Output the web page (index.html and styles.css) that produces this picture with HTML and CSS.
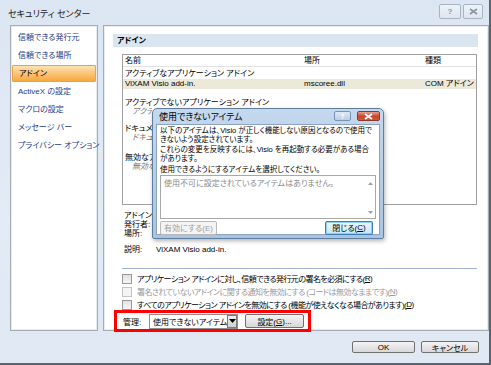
FILE: index.html
```html
<!DOCTYPE html>
<html lang="ja">
<head>
    <meta charset="UTF-8">
    <title>セキュリティ センター</title>
    <link rel="stylesheet" href="styles.css">
</head>
<body>
    <div class="window">
        <!-- タイトルバー -->
        <div class="titlebar">
            <span class="title">セキュリティ センター</span>
            <div class="caption-buttons">
                <span class="cap-btn">?</span>
                <span class="cap-btn close">
                    <svg width="9" height="7" viewBox="0 0 9 7"><path d="M1 1 L8 6 M8 1 L1 6" stroke="#8a96a6" stroke-width="1.6"/></svg>
                </span>
            </div>
        </div>

        <div class="main">
            <!-- 左ナビ -->
            <ul class="nav">
                <li>信頼できる発行元</li>
                <li>信頼できる場所</li>
                <li class="active">アドイン</li>
                <li>ActiveX の設定</li>
                <li>マクロの設定</li>
                <li>メッセージ バー</li>
                <li>プライバシー オプション</li>
            </ul>

            <!-- 右パネル -->
            <div class="panel">
                <div class="section-head">アドイン</div>

                <div class="addin-table">
                    <div class="row head">
                        <span class="c-name">名前</span>
                        <span class="c-loc">場所</span>
                        <span class="c-type">種類</span>
                    </div>
                    <div class="row group">アクティブなアプリケーション アドイン</div>
                    <div class="row selected">
                        <span class="c-name">ViXAM Visio add-in.</span>
                        <span class="c-loc">mscoree.dll</span>
                        <span class="c-type">COM アドイン</span>
                    </div>
                    <div class="row group gap1">アクティブでないアプリケーション アドイン</div>
                    <div class="row empty under"><span>アクティブでないアプリケーション アドインはありません</span></div>
                    <div class="row group gap2 under"><span>ドキュメント関連アドイン</span></div>
                    <div class="row empty under"><span>ドキュメント関連アドインはありません</span></div>
                    <div class="row group gap3 under"><span>無効なアプリケーション アドイン</span></div>
                    <div class="row empty under"><span>無効なアプリケーション アドインはありません</span></div>
                </div>

                <div class="details">
                    <div class="d-row"><span class="d-label clip">アドイン:</span></div>
                    <div class="d-row"><span class="d-label clip">発行者:</span></div>
                    <div class="d-row"><span class="d-label clip">場所:</span></div>
                    <div class="d-row desc"><span class="d-label">説明:</span><span>ViXAM Visio add-in.</span></div>
                </div>

                <div class="separator"></div>

                <div class="options">
                    <label class="opt"><span class="box"></span>アプリケーション アドインに対し、信頼できる発行元の署名を必須にする(<u>R</u>)</label>
                    <label class="opt disabled"><span class="box"></span>署名されていないアドインに関する通知を無効にする (コードは無効なままです)(<u>N</u>)</label>
                    <label class="opt"><span class="box"></span>すべてのアプリケーション アドインを無効にする (機能が使えなくなる場合があります)(<u>D</u>)</label>
                </div>

                <div class="manage">
                    <span class="manage-label">管理:</span>
                    <div class="select">
                        <span class="select-text">使用できないアイテム</span>
                        <span class="select-arrow">
                            <svg width="7" height="4" viewBox="0 0 7 4"><path d="M0 0 H7 L3.5 4 Z" fill="#000"/></svg>
                        </span>
                    </div>
                    <span class="btn">設定(<u>G</u>)...</span>
                </div>
            </div>
        </div>

        <div class="footer">
            <span class="btn big ok">OK</span>
            <span class="btn big">キャンセル</span>
        </div>

        <!-- 使用できないアイテム ダイアログ -->
        <div class="dialog">
            <div class="dlg-title">
                <span>使用できないアイテム</span>
                <div class="dlg-buttons">
                    <span class="dlg-btn">?</span>
                    <span class="dlg-btn red">
                        <svg width="9" height="7" viewBox="0 0 9 7"><path d="M1 1 L8 6 M8 1 L1 6" stroke="#fff" stroke-width="1.8"/></svg>
                    </span>
                </div>
            </div>
            <div class="dlg-body">
                <p>以下のアイテムは、Visio が正しく機能しない原因となるので使用できないよう設定されています。</p>
                <p>これらの変更を反映するには、Visio を再起動する必要がある場合があります。</p>
                <p class="pick">使用できるようにするアイテムを選択してください。</p>
                <div class="listbox">
                    <span class="list-empty">使用不可に設定されているアイテムはありません。</span>
                    <div class="scroll">
                        <svg width="5" height="3" viewBox="0 0 5 3"><path d="M0 3 H5 L2.5 0 Z" fill="#a0a0a0"/></svg>
                        <svg width="5" height="3" viewBox="0 0 5 3"><path d="M0 0 H5 L2.5 3 Z" fill="#a0a0a0"/></svg>
                    </div>
                </div>
                <div class="dlg-actions">
                    <span class="btn disabled">有効にする(E)</span>
                    <span class="btn focus">閉じる(<u>C</u>)</span>
                </div>
            </div>
        </div>
    </div>
</body>
</html>
```

FILE: styles.css
```css
/* 全体 */
body {
    margin: 0;
    font-family: "Liberation Sans", "Noto Sans CJK JP", sans-serif;
    font-size: 8px;
    font-feature-settings: "palt";
    color: #000;
}

.window {
    position: relative;
    width: 489px;
    height: 363px;
    background: linear-gradient(#dce6f2, #e3ebf5 60%, #dfe8f3);
    border-right: 2px solid #5a6470;
    border-bottom: 2px solid #5a6470;
    overflow: hidden;
}

/* タイトルバー */
.titlebar {
    height: 25px;
    display: flex;
    justify-content: space-between;
    align-items: flex-start;
}

.title {
    margin: 7px 0 0 8px;
    font-size: 9px;
    color: #1a1a1a;
}

.caption-buttons {
    display: flex;
    gap: 2px;
    margin: 4px 6px 0 0;
}

.cap-btn {
    width: 20px;
    height: 13px;
    border: 1px solid #a8b4c2;
    border-radius: 2px;
    background: linear-gradient(#eef3f9, #dde5ef);
    color: #8a96a6;
    font-size: 8px;
    font-weight: bold;
    display: flex;
    align-items: center;
    justify-content: center;
}

.cap-btn.close {
    width: 18px;
}

/* メイン */
.main {
    display: flex;
    gap: 5px;
    padding: 0 0 0 10px;
    height: 306px;
}

.nav {
    list-style: none;
    margin: 0;
    padding: 3px 1px;
    width: 84px;
    background: #fff;
    border: 1px solid #a7acb3;
    box-shadow: inset 0 0 0 1px #e8ecf0;
}

.nav li {
    height: 17px;
    line-height: 17px;
    padding-left: 6px;
    margin-bottom: 1px;
    color: #1d3b8c;
    white-space: nowrap;
}

.nav li.active {
    color: #000;
    background: linear-gradient(#fde3b0, #fbc478 50%, #f7a83e);
    border: 1px solid #e1a64d;
    border-radius: 1px;
    height: 15px;
    line-height: 15px;
}

.panel {
    width: 377px;
    background: #fff;
    border: 1px solid #a7acb3;
    box-shadow: inset 0 0 0 1px #e8ecf0;
    padding: 8px 10px 0 9px;
}

.section-head {
    height: 13px;
    line-height: 13px;
    background: #dbe5f0;
    font-weight: bold;
    padding-left: 4px;
    margin-bottom: 7px;
}

/* アドイン一覧 */
.addin-table {
    margin: 0 1px 0 9px;
    height: 149px;
    border: 1px solid #a0a0a0;
    overflow: hidden;
}

.row {
    display: flex;
    height: 9px;
    line-height: 9px;
    padding-left: 2px;
    white-space: nowrap;
}

.row.under span {
    max-width: 27px;
    overflow: hidden;
}

.row.empty.under span {
    max-width: 20px;
}

.row.head {
    height: 11px;
    line-height: 12px;
    border-bottom: 1px solid #e2e2e2;
    margin-bottom: 2px;
}

.c-name {
    width: 179px;
}

.c-loc {
    width: 121px;
}

.row.selected {
    background: #ede9da;
    height: 10px;
    line-height: 10px;
    margin-top: 1px;
}

.row.gap1 {
    margin-top: 9px;
}

.row.gap2 {
    margin-top: 8px;
}

.row.gap3 {
    margin-top: 11px;
}

.row.empty {
    color: #7a7a7a;
    font-style: italic;
    padding-left: 9px;
}

/* 詳細 */
.details {
    margin: 6px 0 0 11px;
}

.d-row {
    display: flex;
    height: 9px;
    line-height: 9px;
}

.d-label {
    width: 32px;
    white-space: nowrap;
}

.d-label.clip {
    width: 28px;
    overflow: hidden;
}

.d-row.desc {
    margin-top: 7px;
}

.separator {
    margin: 14px 1px 0 9px;
    border-top: 1px solid #9db3d3;
}

/* チェックボックス */
.options {
    margin: 3px 0 0 9px;
}

.opt {
    display: flex;
    align-items: center;
    height: 13px;
    white-space: nowrap;
    letter-spacing: -0.55px;
}

.opt .box {
    width: 8px;
    height: 8px;
    border: 1px solid #9a9a9a;
    background: linear-gradient(#e2e2e2, #f6f6f6);
    margin-right: 5px;
}

.opt.disabled {
    color: #9a9a9a;
}

.opt.disabled .box {
    border-color: #c4c4c4;
    background: #f4f4f4;
}

/* 管理 */
.manage {
    display: flex;
    align-items: center;
    gap: 6px;
    height: 16px;
    width: 185px;
    margin: -1px 0 0 1px;
    padding: 0 0 0 6px;
    border: 3px solid #f00;
}

.manage-label {
    width: 20px;
}

.select {
    display: flex;
    align-items: center;
    width: 87px;
    height: 13px;
    border: 1px solid #8e8e8e;
}

.select-text {
    flex: 1;
    padding-left: 3px;
    white-space: nowrap;
}

.select-arrow {
    width: 9px;
    height: 11px;
    border: 1px solid #7a7a7a;
    background: linear-gradient(#f2f2f2, #cfcfcf);
    display: flex;
    align-items: center;
    justify-content: center;
}

.btn {
    display: inline-flex;
    align-items: center;
    justify-content: center;
    height: 12px;
    border: 1px solid #707070;
    border-radius: 2px;
    background: linear-gradient(#f4f4f4, #e6e6e6 50%, #d8d8d8);
    white-space: nowrap;
}

.manage .btn {
    width: 57px;
    margin-left: 1px;
}

/* フッター */
.footer {
    display: flex;
    justify-content: flex-end;
    gap: 6px;
    padding: 10px 10px 0 0;
}

.btn.big {
    height: 10px;
    width: 56px;
}

.btn.big.ok {
    width: 61px;
}

/* ダイアログ */
.dialog {
    position: absolute;
    left: 152px;
    top: 108px;
    width: 224px;
    height: 126px;
    padding: 0 3px 3px 3px;
    background: linear-gradient(#c4d8ee, #a9c4e2);
    border: 1px solid #5f7e9e;
    border-radius: 5px 5px 2px 2px;
    box-shadow: 1px 2px 4px rgba(0, 0, 0, 0.3);
}

.dlg-title {
    height: 15px;
    display: flex;
    justify-content: space-between;
    align-items: center;
    padding-left: 3px;
    font-size: 9px;
}

.dlg-buttons {
    display: flex;
    gap: 6px;
    margin-top: -1px;
}

.dlg-btn {
    width: 15px;
    height: 8px;
    border: 1px solid #7a93b3;
    border-radius: 2px;
    background: linear-gradient(#dfe9f5, #b9cde6);
    color: #fff;
    font-size: 7px;
    font-weight: bold;
    display: flex;
    align-items: center;
    justify-content: center;
}

.dlg-btn.red {
    width: 21px;
    border-color: #8b3a2a;
    background: linear-gradient(#e8a08e, #c9442c 55%, #d0583a);
}

.dlg-body {
    background: #fff;
    border: 1px solid #8aa3c0;
    height: 107px;
    padding: 2px 3px 0 3px;
}

.dlg-body p {
    margin: 0 0 2px 0;
    line-height: 8.7px;
    font-size: 7.5px;
}

.dlg-body p.pick {
    margin-bottom: 0;
}

.listbox {
    display: flex;
    height: 42px;
    border: 1px solid #a8a8a8;
}

.list-empty {
    flex: 1;
    color: #8a8a8a;
    padding: 1px 3px;
}

.scroll {
    width: 9px;
    display: flex;
    flex-direction: column;
    justify-content: space-between;
    align-items: center;
    padding: 6px 0 4px;
}

.dlg-actions {
    display: flex;
    justify-content: space-between;
    margin-top: 2px;
}

.btn.disabled {
    width: 55px;
    color: #a0a0a0;
    border-color: #b8b8b8;
    background: #f4f4f4;
}

.btn.focus {
    width: 46px;
    border-color: #3c7fb1;
    box-shadow: inset 0 0 0 1px #8fd0f0;
    background: linear-gradient(#eaf6fd, #d9f0fc 50%, #bee6fd);
    margin-right: 3px;
}
```
